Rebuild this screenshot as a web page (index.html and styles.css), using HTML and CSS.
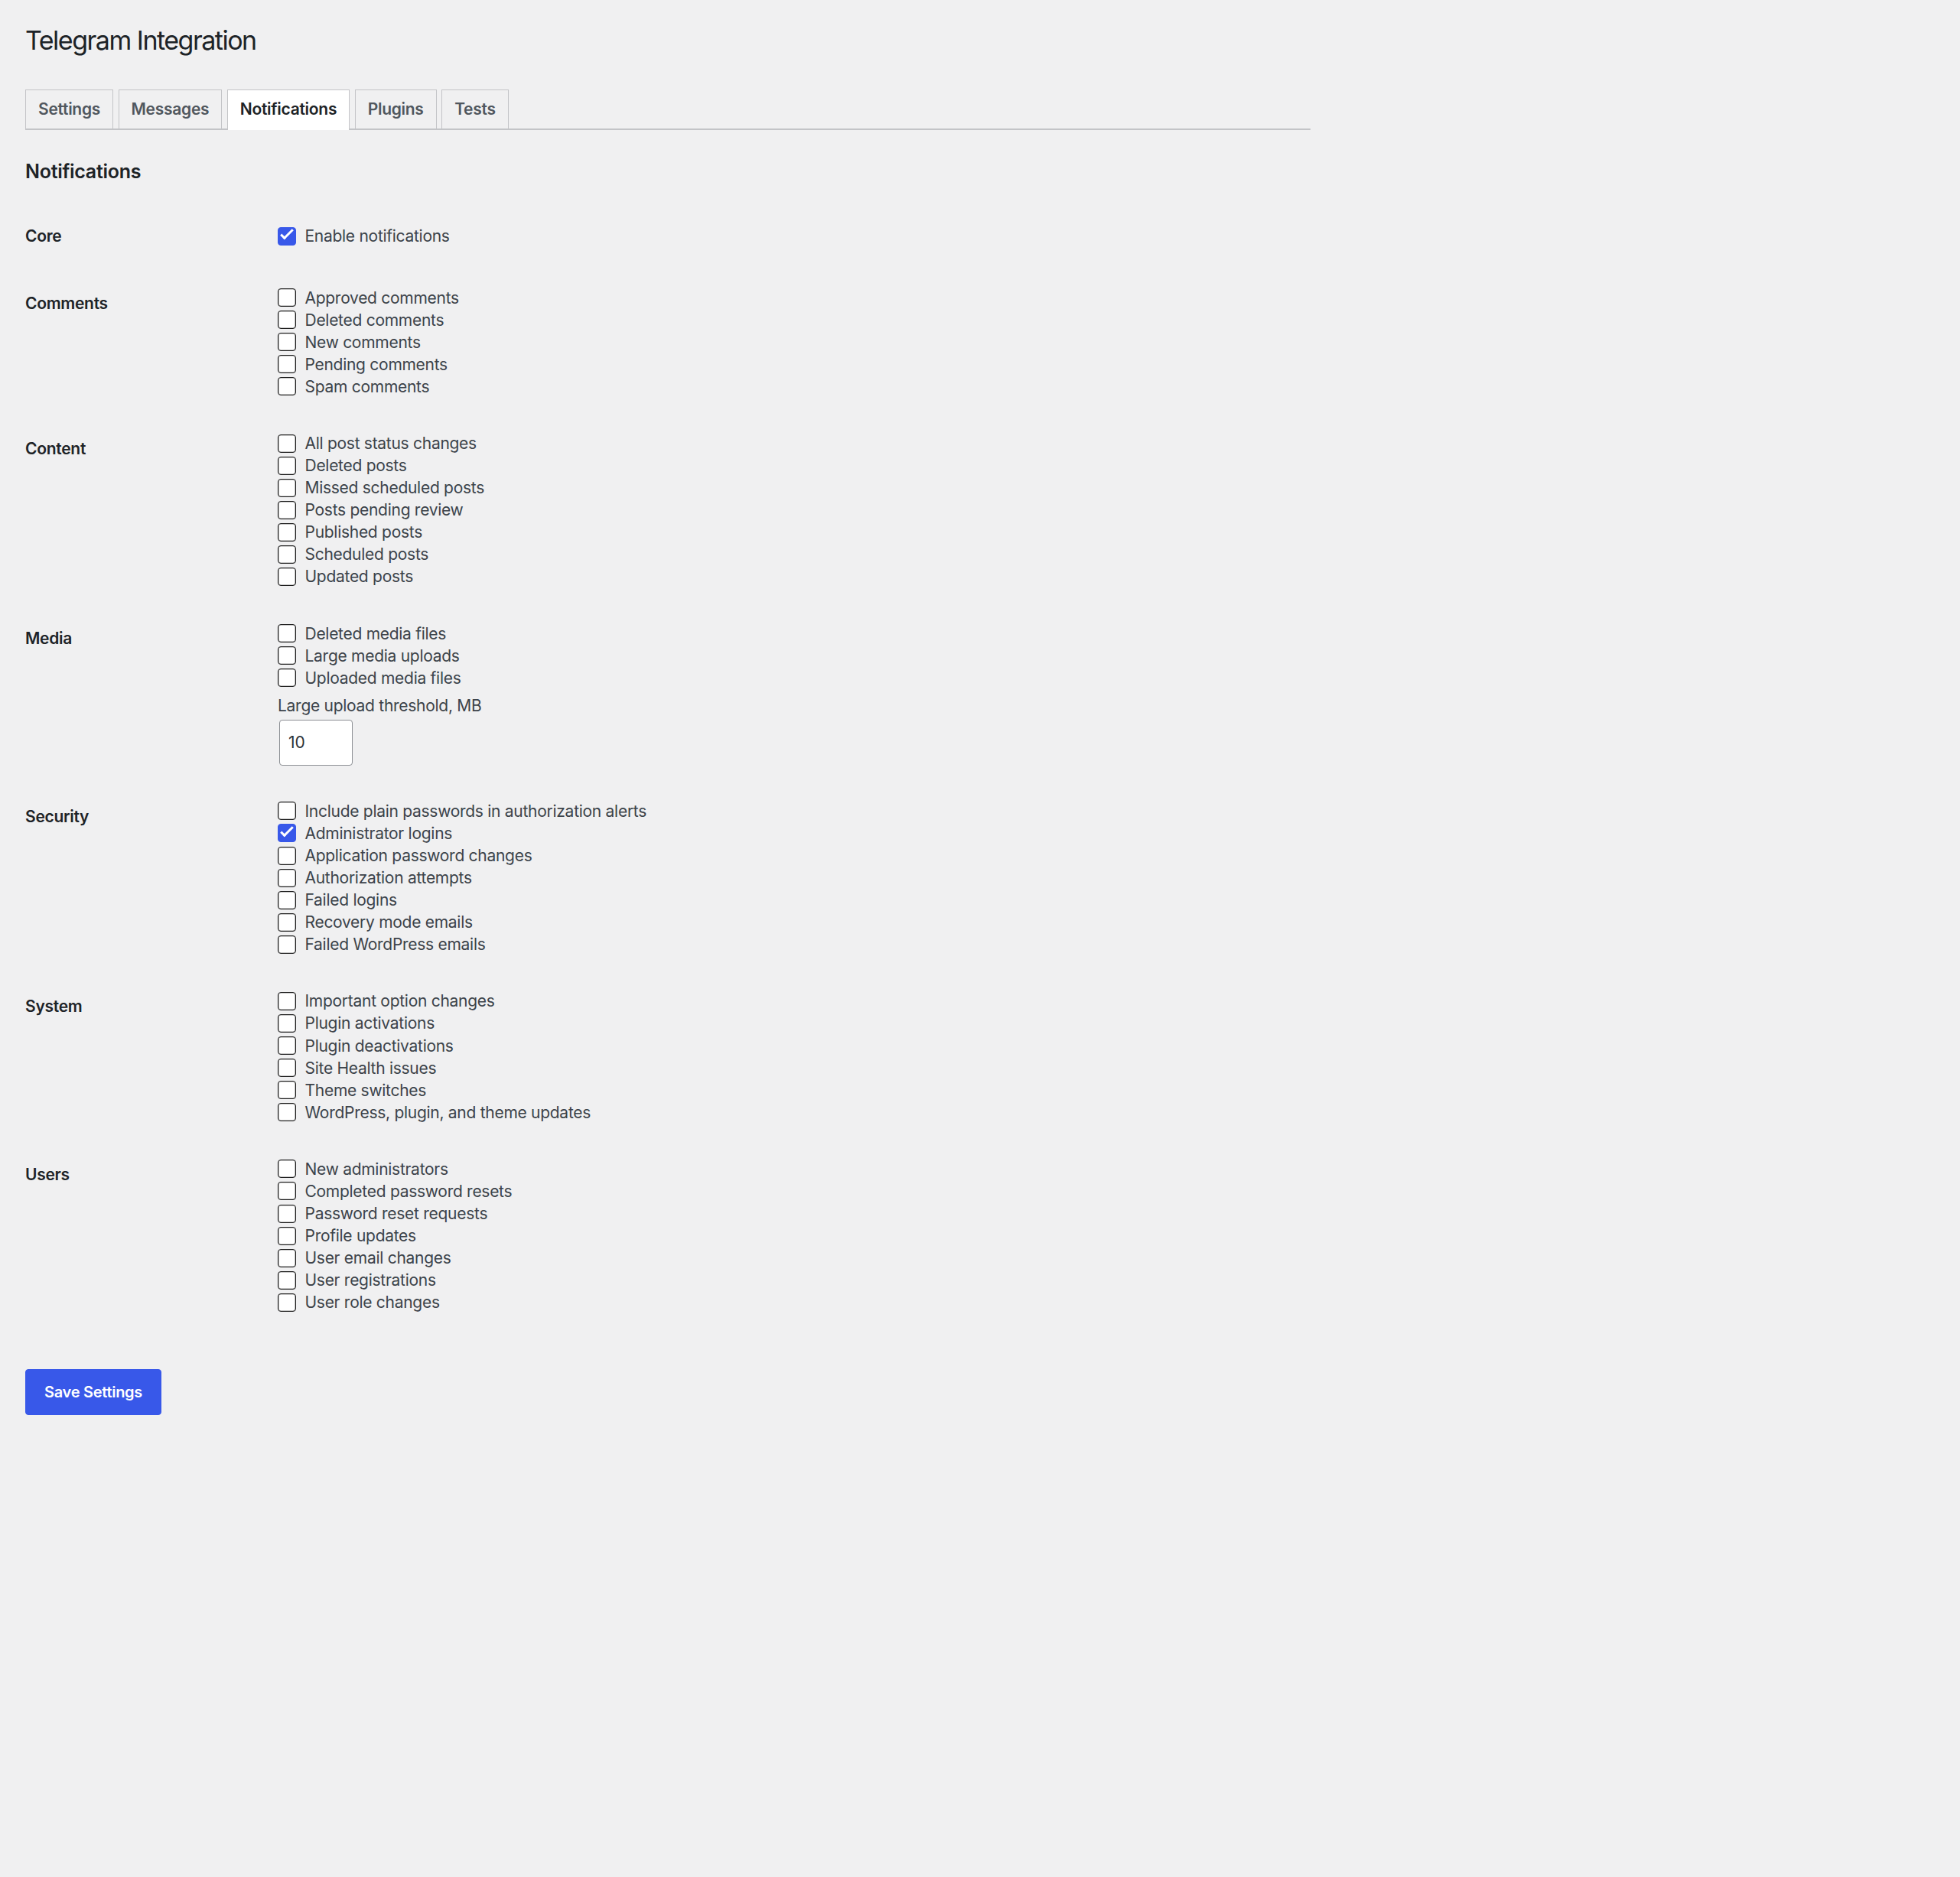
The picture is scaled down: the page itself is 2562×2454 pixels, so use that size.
FILE: index.html
```html
<!DOCTYPE html>
<html lang="en">
  <head>
    <meta charset="UTF-8" />
    <meta name="viewport" content="width=device-width, initial-scale=1.0" />
    <title>Telegram Integration</title>
    <link rel="stylesheet" href="styles.css">
  </head>
  <body>
    <div class="wrap">
      <h1 class="page-title">Telegram Integration</h1>

      <nav class="nav-tabs">
        <a class="nav-tab" href="#">Settings</a>
        <a class="nav-tab" href="#">Messages</a>
        <a class="nav-tab nav-tab-active" href="#">Notifications</a>
        <a class="nav-tab" href="#">Plugins</a>
        <a class="nav-tab" href="#">Tests</a>
      </nav>

      <form>
        <h2 class="section-title">Notifications</h2>

        <table class="form-table">
          <tr class="row-core">
            <th>Core</th>
            <td>
              <label class="option"><input class="check" type="checkbox" checked> Enable notifications</label>
            </td>
          </tr>
          <tr>
            <th>Comments</th>
            <td>
              <label class="option"><input class="check" type="checkbox"> Approved comments</label>
              <label class="option"><input class="check" type="checkbox"> Deleted comments</label>
              <label class="option"><input class="check" type="checkbox"> New comments</label>
              <label class="option"><input class="check" type="checkbox"> Pending comments</label>
              <label class="option"><input class="check" type="checkbox"> Spam comments</label>
            </td>
          </tr>
          <tr>
            <th>Content</th>
            <td>
              <label class="option"><input class="check" type="checkbox"> All post status changes</label>
              <label class="option"><input class="check" type="checkbox"> Deleted posts</label>
              <label class="option"><input class="check" type="checkbox"> Missed scheduled posts</label>
              <label class="option"><input class="check" type="checkbox"> Posts pending review</label>
              <label class="option"><input class="check" type="checkbox"> Published posts</label>
              <label class="option"><input class="check" type="checkbox"> Scheduled posts</label>
              <label class="option"><input class="check" type="checkbox"> Updated posts</label>
            </td>
          </tr>
          <tr>
            <th>Media</th>
            <td>
              <label class="option"><input class="check" type="checkbox"> Deleted media files</label>
              <label class="option"><input class="check" type="checkbox"> Large media uploads</label>
              <label class="option"><input class="check" type="checkbox"> Uploaded media files</label>
              <label class="field-label" for="threshold">Large upload threshold, MB</label>
              <input class="small-text" id="threshold" type="text" value="10">
            </td>
          </tr>
          <tr>
            <th>Security</th>
            <td>
              <label class="option"><input class="check" type="checkbox"> Include plain passwords in authorization alerts</label>
              <label class="option"><input class="check" type="checkbox" checked> Administrator logins</label>
              <label class="option"><input class="check" type="checkbox"> Application password changes</label>
              <label class="option"><input class="check" type="checkbox"> Authorization attempts</label>
              <label class="option"><input class="check" type="checkbox"> Failed logins</label>
              <label class="option"><input class="check" type="checkbox"> Recovery mode emails</label>
              <label class="option"><input class="check" type="checkbox"> Failed WordPress emails</label>
            </td>
          </tr>
          <tr>
            <th>System</th>
            <td>
              <label class="option"><input class="check" type="checkbox"> Important option changes</label>
              <label class="option"><input class="check" type="checkbox"> Plugin activations</label>
              <label class="option"><input class="check" type="checkbox"> Plugin deactivations</label>
              <label class="option"><input class="check" type="checkbox"> Site Health issues</label>
              <label class="option"><input class="check" type="checkbox"> Theme switches</label>
              <label class="option"><input class="check" type="checkbox"> WordPress, plugin, and theme updates</label>
            </td>
          </tr>
          <tr>
            <th>Users</th>
            <td>
              <label class="option"><input class="check" type="checkbox"> New administrators</label>
              <label class="option"><input class="check" type="checkbox"> Completed password resets</label>
              <label class="option"><input class="check" type="checkbox"> Password reset requests</label>
              <label class="option"><input class="check" type="checkbox"> Profile updates</label>
              <label class="option"><input class="check" type="checkbox"> User email changes</label>
              <label class="option"><input class="check" type="checkbox"> User registrations</label>
              <label class="option"><input class="check" type="checkbox"> User role changes</label>
            </td>
          </tr>
        </table>

        <p class="submit">
          <button class="button-primary" type="button">Save Settings</button>
        </p>
      </form>
    </div>
  </body>
</html>
```

FILE: styles.css
```css
html {
  background-color: #f0f0f1;
}

body {
  margin: 0;
  font-family: Inter, "Noto Sans", sans-serif;
  font-size: 21px;
  letter-spacing: -0.28px;
  color: #3c434a;
  background-color: #f0f0f1;
}

.wrap {
  width: 1680px;
  padding: 0 0 40px 33px;
}

.page-title {
  margin: 0;
  padding-top: 30.5px;
  font-size: 34px;
  font-weight: 400;
  letter-spacing: -1.5px;
  line-height: 44px;
  color: #1d2327;
}

/* tabs */
.nav-tabs {
  display: flex;
  gap: 6.5px;
  margin-top: 42.5px;
  border-bottom: 2px solid #c3c4c7;
}

.nav-tab {
  padding: 7px 16px;
  border: 1px solid #c3c4c7;
  border-bottom: none;
  font-size: 21px;
  font-weight: 600;
  line-height: 36px;
  color: #50575e;
  text-decoration: none;
  background-color: #f0f0f1;
}

.nav-tab-active {
  margin-bottom: -2px;
  padding-bottom: 9px;
  color: #1d2327;
  background-color: #fff;
}

.section-title {
  margin: 38px 0 0;
  font-size: 25px;
  font-weight: 600;
  line-height: 1.3;
  color: #1d2327;
}

/* settings table */
.form-table {
  margin-top: 23.5px;
  border-collapse: collapse;
  border-spacing: 0;
}

.form-table th {
  width: 330px;
  padding: 30.5px 0 0;
  vertical-align: top;
  text-align: left;
  font-weight: 600;
  line-height: 27px;
  color: #1d2327;
}

.form-table td {
  padding: 22.6px 0;
  vertical-align: top;
}

.form-table .row-core td {
  padding: 30px 0 29px;
}

.option {
  display: flex;
  align-items: center;
  gap: 11.5px;
  height: 29.05px;
  white-space: nowrap;
}

.check {
  position: relative;
  flex: none;
  appearance: none;
  width: 24px;
  height: 24px;
  margin: 0;
  border: 1px solid #1e1e1e;
  border-radius: 4px;
  box-shadow: inset 0 0 0 0.6px rgba(30, 30, 30, 0.5);
  background-color: #fff;
}

.check:checked {
  border-color: #3858e9;
  box-shadow: none;
  background-color: #3858e9;
}

.check:checked::before {
  content: "";
  position: absolute;
  left: 6.9px;
  top: -1.6px;
  width: 5px;
  height: 14px;
  border: solid #fff;
  border-width: 0 3.5px 3.5px 0;
  transform: rotate(45deg);
}

.field-label {
  display: block;
  margin-top: 7px;
  line-height: 29px;
}

.small-text {
  display: block;
  box-sizing: border-box;
  width: 96px;
  height: 60px;
  margin: 4px 0 0 2px;
  padding: 0 11px;
  border: 1px solid #8c8f94;
  border-radius: 4px;
  font-family: inherit;
  font-size: 21px;
  color: #2c3338;
  background-color: #fff;
}

.submit {
  margin: 0;
  padding-top: 50px;
}

.button-primary {
  height: 60px;
  padding: 0 24px;
  border: 1px solid #3858e9;
  border-radius: 4px;
  font-family: inherit;
  font-size: 20px;
  font-weight: 600;
  letter-spacing: -0.28px;
  color: #fff;
  background-color: #3858e9;
}
```
